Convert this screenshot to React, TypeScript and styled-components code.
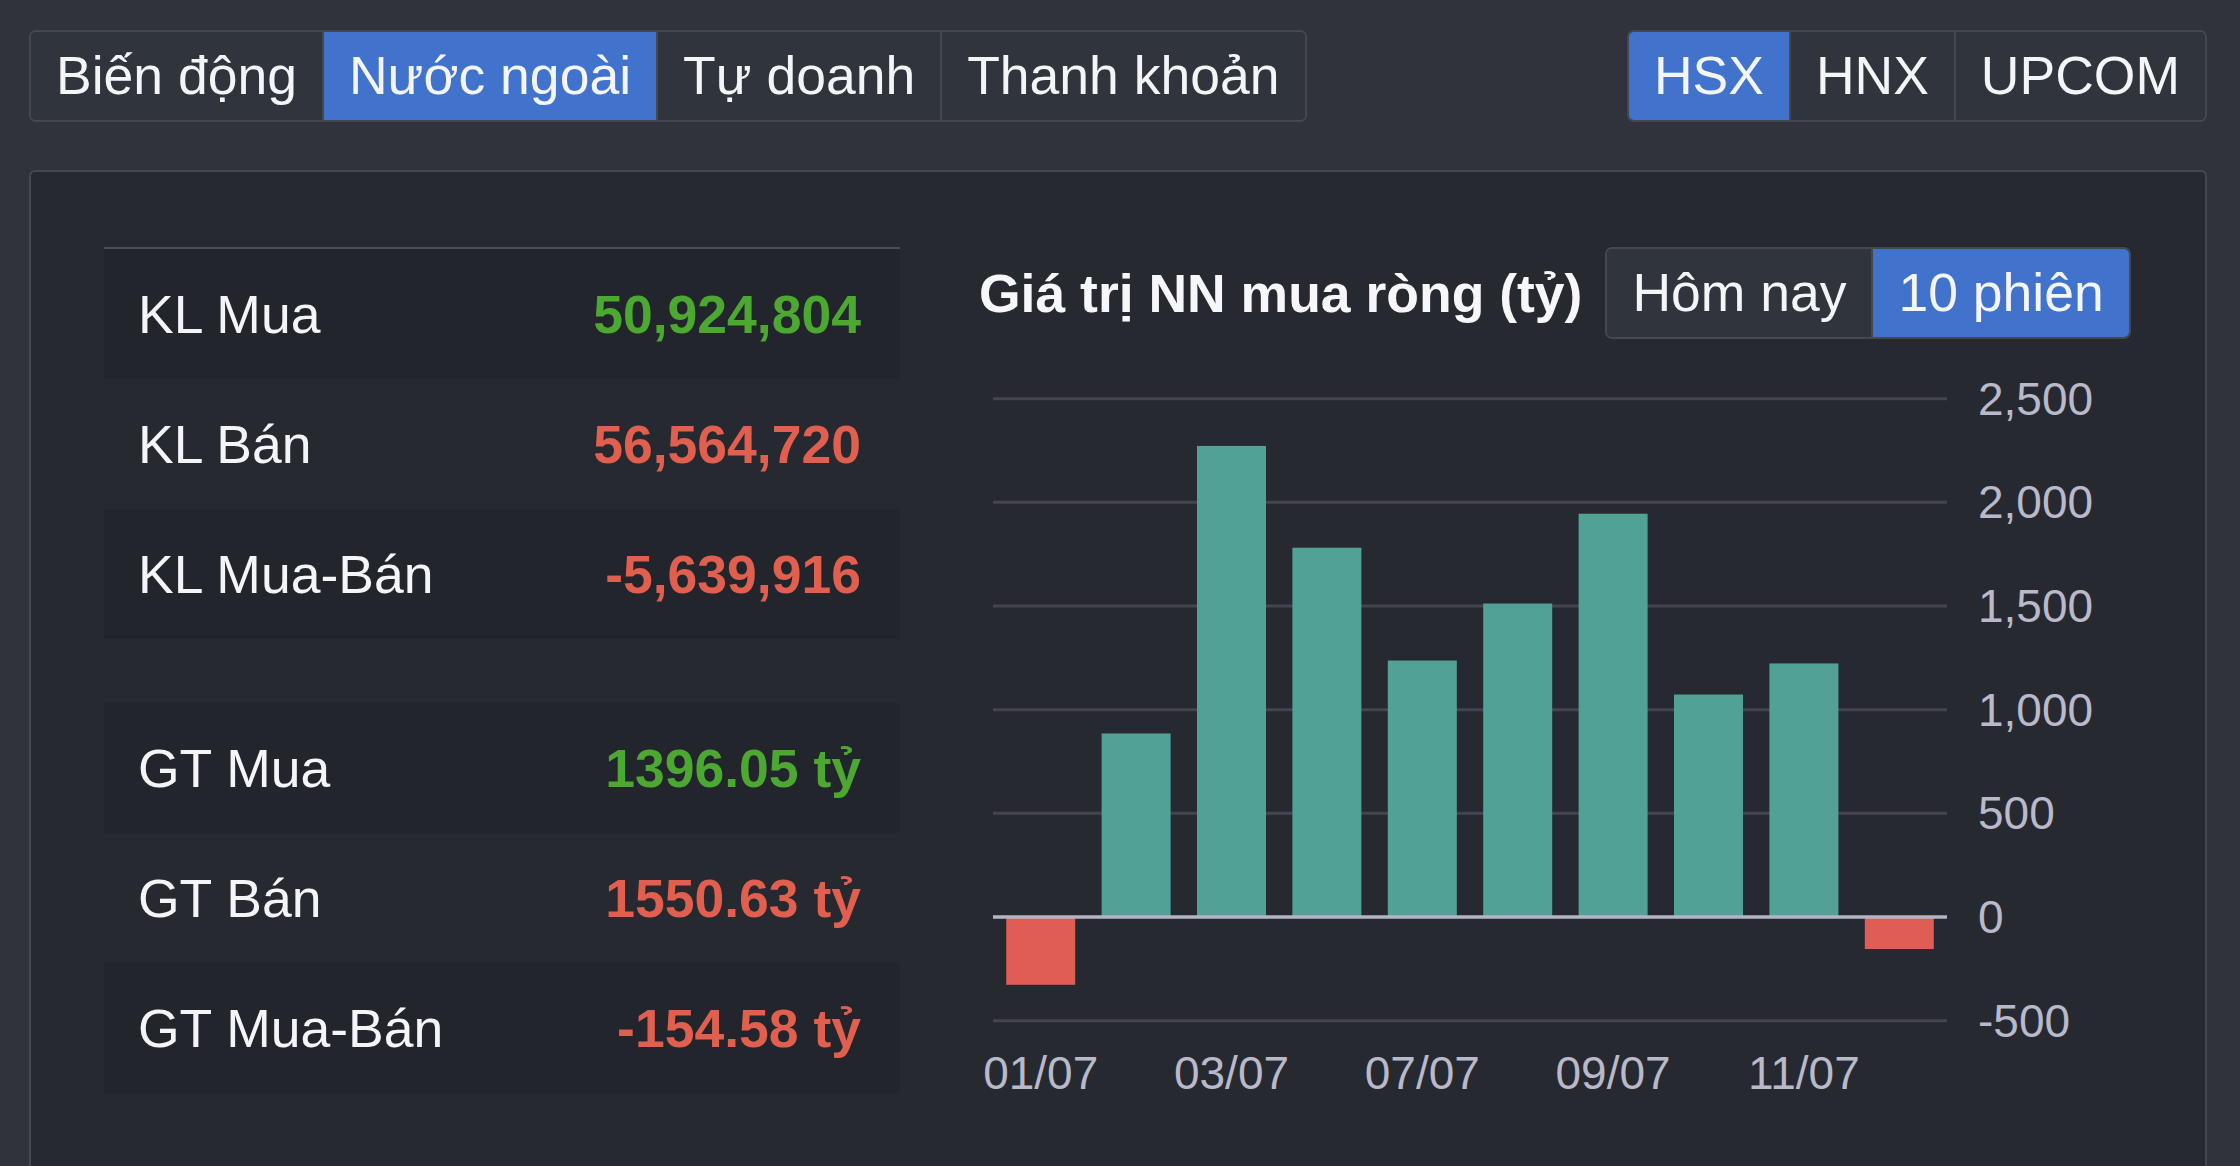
import React, { useState } from "react";
import styled, { createGlobalStyle } from "styled-components";

const GlobalStyle = createGlobalStyle`
  html, body {
    margin: 0;
    background: #30333b;
    overflow: hidden;
  }
  body {
    font-family: "Liberation Sans", Arial, Helvetica, sans-serif;
    color: #f4f5f7;
  }
`;

const Page = styled.div`
  padding: 30px 33px 0 29px;
`;

const TopBar = styled.div`
  display: flex;
  justify-content: space-between;
  align-items: flex-start;
`;

const SegGroup = styled.div`
  display: flex;
  flex: none;
  height: 92px;
  box-sizing: border-box;
  border: 2px solid #45484f;
  border-radius: 7px;
  overflow: hidden;
`;

const SegButton = styled.button<{ $active?: boolean }>`
  display: flex;
  align-items: center;
  margin: 0;
  padding: 0 25px;
  border: none;
  border-left: 2px solid #45484f;
  background: ${(p) => (p.$active ? "#4273cc" : "#30343c")};
  color: #f4f5f7;
  font-family: inherit;
  font-size: 53.5px;
  line-height: 1;
  white-space: nowrap;
  cursor: pointer;

  &:first-child {
    border-left: none;
  }
`;

const Panel = styled.section`
  margin-top: 48px;
  display: flex;
  align-items: flex-start;
  gap: 79px;
  padding: 75px 74px 90px 73px;
  border: 2px solid #45484f;
  border-radius: 6px;
  background: #262930;
`;

const StatTable = styled.div`
  width: 796px;
  flex: none;
  border-top: 2px solid #4b4e56;
`;

const StatRow = styled.div<{ $dark?: boolean }>`
  display: flex;
  justify-content: space-between;
  align-items: center;
  height: 130px;
  padding: 0 39px 0 34px;
  background: ${(p) => (p.$dark ? "#22252c" : "transparent")};
`;

const Spacer = styled.div`
  height: 64px;
`;

const Label = styled.span`
  font-size: 53.5px;
  color: #f4f5f7;
`;

const Value = styled.span<{ $up?: boolean }>`
  font-size: 53.5px;
  font-weight: 700;
  color: ${(p) => (p.$up ? "#4da832" : "#e15f4e")};
`;

const ChartCol = styled.div`
  flex: 1;
  display: flex;
  flex-direction: column;
`;

const ChartHead = styled.div`
  display: flex;
  align-items: center;
  gap: 23px;
`;

const ChartTitle = styled.h2`
  margin: 0;
  flex: none;
  white-space: nowrap;
  font-size: 53.5px;
  font-weight: 700;
  color: #f7f7f9;
`;

const ChartSvg = styled.svg`
  display: block;
`;

const AxisText = styled.text`
  font-family: "Liberation Sans", Arial, Helvetica, sans-serif;
  font-size: 46px;
  fill: #b9b9ca;
`;

const stats = [
  { label: "KL Mua", value: "50,924,804", up: true },
  { label: "KL Bán", value: "56,564,720", up: false },
  { label: "KL Mua-Bán", value: "-5,639,916", up: false },
  null,
  { label: "GT Mua", value: "1396.05 tỷ", up: true },
  { label: "GT Bán", value: "1550.63 tỷ", up: false },
  { label: "GT Mua-Bán", value: "-154.58 tỷ", up: false },
];

const sessions = [
  { date: "01/07", v: -327 },
  { date: "02/07", v: 885 },
  { date: "03/07", v: 2272 },
  { date: "04/07", v: 1781 },
  { date: "07/07", v: 1237 },
  { date: "08/07", v: 1512 },
  { date: "09/07", v: 1945 },
  { date: "10/07", v: 1073 },
  { date: "11/07", v: 1223 },
  { date: "14/07", v: -154.58 },
];

// chart geometry (svg units = px)
const X0 = 14;
const X1 = 968;
const ZERO = 578;
const STEP = 103.67; // px per 500
const yOf = (v: number) => ZERO - (v / 500) * STEP;
const band = (X1 - X0) / sessions.length;
const BAR_W = 69;

function NetChart() {
  const ticks = [2500, 2000, 1500, 1000, 500, 0, -500];
  return (
    <ChartSvg width={1152} height={800} viewBox="0 0 1152 800">
      {ticks
        .filter((t) => t !== 0)
        .map((t) => (
          <line key={t} x1={X0} x2={X1} y1={yOf(t)} y2={yOf(t)} stroke="#44454f" strokeWidth={3} />
        ))}
      {sessions.map((s, i) => {
        const cx = X0 + band * (i + 0.5);
        const y = yOf(Math.max(s.v, 0));
        const h = Math.abs(yOf(s.v) - ZERO);
        return (
          <rect
            key={s.date}
            x={cx - BAR_W / 2}
            y={y}
            width={BAR_W}
            height={h}
            fill={s.v >= 0 ? "#52a197" : "#e05d55"}
          />
        );
      })}
      <line x1={X0} x2={X1} y1={ZERO} y2={ZERO} stroke="#b3b5c6" strokeWidth={3.5} />
      {ticks.map((t) => (
        <AxisText key={t} x={999} y={yOf(t) + 16}>
          {t.toLocaleString("en-US")}
        </AxisText>
      ))}
      {sessions.map((s, i) =>
        i % 2 === 0 ? (
          <AxisText key={s.date} x={X0 + band * (i + 0.5)} y={750} textAnchor="middle">
            {s.date}
          </AxisText>
        ) : null
      )}
    </ChartSvg>
  );
}

export default function App() {
  const [tab, setTab] = useState("Nước ngoài");
  const [market, setMarket] = useState("HSX");
  const [range, setRange] = useState("10 phiên");

  return (
    <Page>
      <GlobalStyle />
      <TopBar>
        <SegGroup>
          {["Biến động", "Nước ngoài", "Tự doanh", "Thanh khoản"].map((t) => (
            <SegButton key={t} $active={tab === t} onClick={() => setTab(t)}>
              {t}
            </SegButton>
          ))}
        </SegGroup>
        <SegGroup>
          {["HSX", "HNX", "UPCOM"].map((m) => (
            <SegButton key={m} $active={market === m} onClick={() => setMarket(m)}>
              {m}
            </SegButton>
          ))}
        </SegGroup>
      </TopBar>

      <Panel>
        <StatTable>
          {stats.map((s, i) =>
            s ? (
              <StatRow key={s.label} $dark={i % 2 === 0}>
                <Label>{s.label}</Label>
                <Value $up={s.up}>{s.value}</Value>
              </StatRow>
            ) : (
              <Spacer key="gap" />
            )
          )}
        </StatTable>

        <ChartCol>
          <ChartHead>
            <ChartTitle>Giá trị NN mua ròng (tỷ)</ChartTitle>
            <SegGroup>
              {["Hôm nay", "10 phiên"].map((r) => (
                <SegButton key={r} $active={range === r} onClick={() => setRange(r)}>
                  {r}
                </SegButton>
              ))}
            </SegGroup>
          </ChartHead>
          <NetChart />
        </ChartCol>
      </Panel>
    </Page>
  );
}
